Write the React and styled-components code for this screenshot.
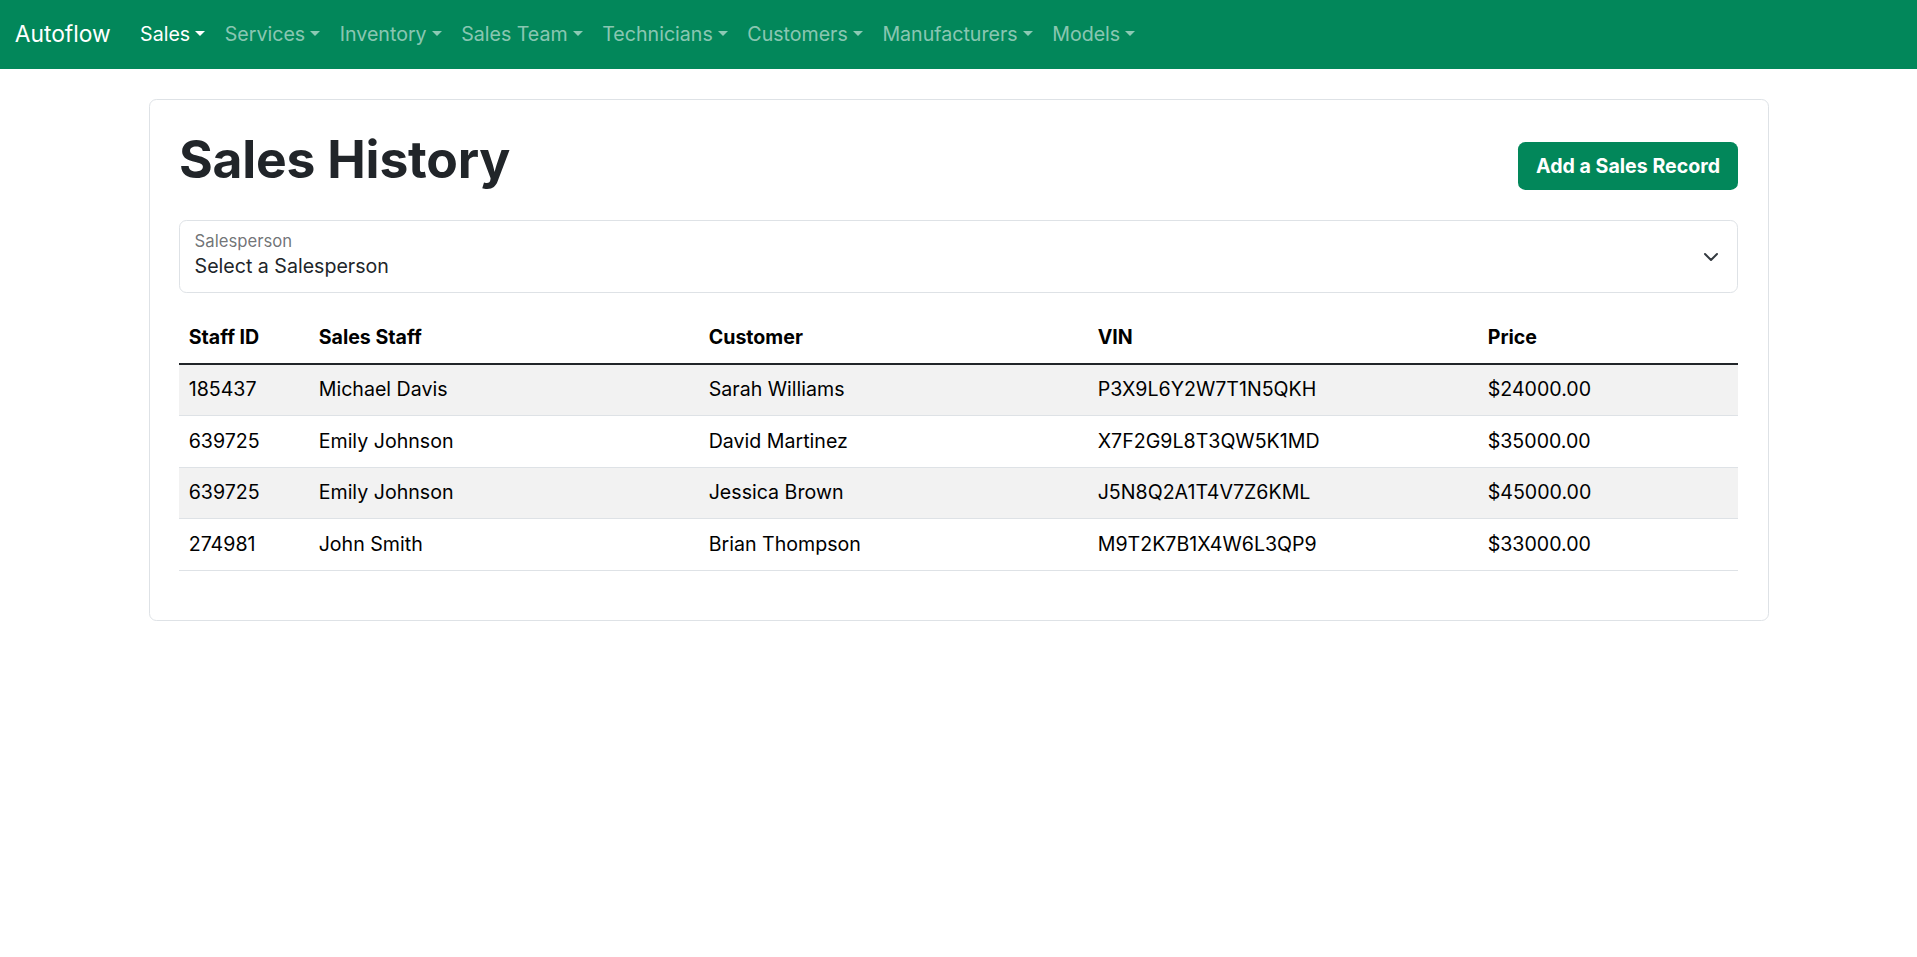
import React from 'react'
import styled, { createGlobalStyle } from 'styled-components'

const GlobalStyle = createGlobalStyle`
  body {
    margin: 0;
    background: #fff;
    font-family: Inter, "Noto Sans", sans-serif;
    font-size: 19.6px;
    line-height: 1.5;
    color: #212529;
  }
  * { box-sizing: border-box; }
`

const menus = ['Sales', 'Services', 'Inventory', 'Sales Team', 'Technicians', 'Customers', 'Manufacturers', 'Models']

const sales = [
  { id: '185437', staff: 'Michael Davis', customer: 'Sarah Williams', vin: 'P3X9L6Y2W7T1N5QKH', price: '$24000.00' },
  { id: '639725', staff: 'Emily Johnson', customer: 'David Martinez', vin: 'X7F2G9L8T3QW5K1MD', price: '$35000.00' },
  { id: '639725', staff: 'Emily Johnson', customer: 'Jessica Brown', vin: 'J5N8Q2A1T4V7Z6KML', price: '$45000.00' },
  { id: '274981', staff: 'John Smith', customer: 'Brian Thompson', vin: 'M9T2K7B1X4W6L3QP9', price: '$33000.00' },
]

const App = () => {
  return (
    <>
      <GlobalStyle />
      <Navbar>
        <Brand href="#">Autoflow</Brand>
        <NavList>
          {menus.map((m, i) => (
            <NavLink key={m} href="#" active={i === 0 ? 1 : 0}>{m}</NavLink>
          ))}
        </NavList>
      </Navbar>
      <Card>
        <Header>
          <Title>Sales History</Title>
          <Button>Add a Sales Record</Button>
        </Header>
        <Floating>
          <FloatLabel>Salesperson</FloatLabel>
          <FloatValue>Select a Salesperson</FloatValue>
          <Chevron viewBox="0 0 16 16">
            <path d="M2 5l6 6 6-6" fill="none" stroke="#343a40" strokeWidth="2" strokeLinecap="round" strokeLinejoin="round" />
          </Chevron>
        </Floating>
        <Table>
          <colgroup>
            <col style={{ width: 130 }} />
            <col style={{ width: 390 }} />
            <col style={{ width: 389 }} />
            <col style={{ width: 390 }} />
            <col />
          </colgroup>
          <thead>
            <tr>
              <Th>Staff ID</Th>
              <Th>Sales Staff</Th>
              <Th>Customer</Th>
              <Th>VIN</Th>
              <Th>Price</Th>
            </tr>
          </thead>
          <tbody>
            {sales.map((s, i) => (
              <Row key={i} striped={i % 2 === 0 ? 1 : 0}>
                <Td>{s.id}</Td>
                <Td>{s.staff}</Td>
                <Td>{s.customer}</Td>
                <Td>{s.vin}</Td>
                <Td>{s.price}</Td>
              </Row>
            ))}
          </tbody>
        </Table>
      </Card>
    </>
  )
}

export default App

const Navbar = styled.nav`
height: 68.6px;
background: #02875a;
display: flex;
align-items: center;
padding: 0 14.7px;
`
const Brand = styled.a`
font-size: 22.8px;
color: #fff;
text-decoration: none;
margin-right: 19.6px;
`
const NavList = styled.div`
display: flex;
align-items: center;
`
const NavLink = styled.a`
padding: 9.8px;
font-size: 19.6px;
text-decoration: none;
color: ${props => props.active ? '#fff' : 'rgba(255,255,255,0.55)'};
&::after{
    content: "";
    display: inline-block;
    margin-left: 0.255em;
    vertical-align: 0.255em;
    border-top: 0.3em solid;
    border-right: 0.3em solid transparent;
    border-left: 0.3em solid transparent;
    border-bottom: 0;
}
`
const Card = styled.div`
width: 1620px;
margin: 30.4px auto 0;
border: 1px solid #dee2e6;
border-radius: 7.35px;
padding: 29.4px;
`
const Header = styled.div`
display: flex;
justify-content: space-between;
align-items: flex-start;
margin-bottom: 30px;
`
const Title = styled.h1`
margin: 0;
font-size: 51.6px;
font-weight: 700;
line-height: 60px;
letter-spacing: -0.2px;
`
const Button = styled.button`
font-family: Inter, "Noto Sans", sans-serif;
font-size: 19.6px;
font-weight: 700;
color: #fff;
background: #02875a;
border: none;
border-radius: 7.35px;
height: 48px;
padding: 0 18px;
margin-top: 12.6px;
cursor: pointer;
`
const Floating = styled.div`
position: relative;
height: 73px;
border: 1px solid #dee2e6;
border-radius: 7.35px;
padding: 10px 14.7px 0;
`
const FloatLabel = styled.div`
font-size: 16.7px;
color: rgba(33,37,41,0.65);
line-height: 1.3;
`
const FloatValue = styled.div`
font-size: 19.6px;
line-height: 1.4;
`
const Chevron = styled.svg`
position: absolute;
right: 18px;
top: 28px;
width: 16px;
height: 16px;
`
const Table = styled.table`
width: 100%;
margin-top: 19.6px;
margin-bottom: 19.6px;
border-collapse: collapse;
table-layout: fixed;
color: #000;
`
const Th = styled.th`
text-align: left;
font-weight: 700;
padding: 10.5px 9.8px;
line-height: 29.4px;
border-bottom: 2px solid #212529;
`
const Row = styled.tr`
background: ${props => props.striped ? '#f2f2f2' : '#fff'};
border-bottom: 1px solid #dee2e6;
`
const Td = styled.td`
padding: 10.5px 9.8px;
line-height: 29.4px;
`
